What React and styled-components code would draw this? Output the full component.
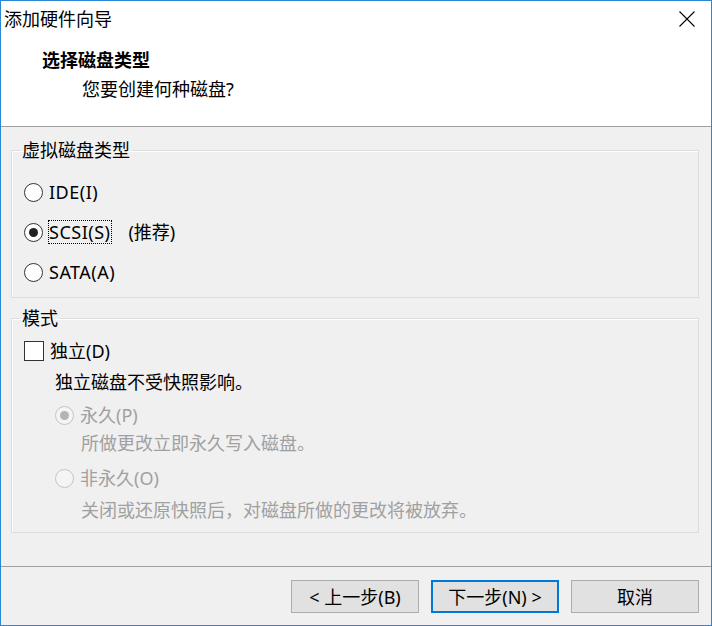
import React from 'react';
import styled, {createGlobalStyle} from "styled-components";

const GlobalStyle = createGlobalStyle`
    body {
        margin: 0;
        background: #ffffff;
    }
`

const Window = styled.div`
    width: 712px;
    height: 626px;
    box-sizing: border-box;
    border: 1px solid #2b86d6;
    display: flex;
    flex-direction: column;
    font-family: "Noto Sans", "Noto Sans CJK SC", sans-serif;
    font-size: 18px;
    color: #000;
    background: #f0f0f0;
`

const Top = styled.div`
    flex: 0 0 126px;
    box-sizing: border-box;
    background: #fff;
    border-bottom: 1px solid #a0a0a0;
`

const TitleBar = styled.div`
    height: 35px;
    display: flex;
    align-items: center;
    justify-content: space-between;
    padding: 0 16px 0 3px;
    line-height: 24px;
`

const Header = styled.div`
    padding: 12px 0 0 41px;
    line-height: 24px;
`

const HeaderTitle = styled.div`
    font-weight: bold;
`

const HeaderSub = styled.div`
    margin-top: 5px;
    padding-left: 40px;
`

const Body = styled.div`
    flex: 0 0 440px;
    box-sizing: border-box;
    padding: 11px 12px 0 10px;
    border-bottom: 1px solid #a0a0a0;
`

const Group = styled.fieldset`
    margin: ${props => props.$gap || 0}px 0 0 0;
    padding: 0;
    min-width: 0;
    border: 1px solid #dcdcdc;
    box-shadow: inset 1px 1px 0 #fff;
`

const Legend = styled.legend`
    margin-left: 8px;
    padding: 0 2px;
    line-height: 24px;
`

const Options = styled.div`
    display: flex;
    flex-direction: column;
    padding: ${props => props.$pad};
`

const Row = styled.div`
    display: flex;
    align-items: center;
    height: ${props => props.$h || 24}px;
    margin-top: ${props => props.$top || 0}px;
    margin-left: ${props => props.$indent || 0}px;
    line-height: 22px;
    color: ${props => props.$disabled ? '#a0a0a0' : '#000'};
`

const Radio = styled.span`
    width: 17px;
    height: 17px;
    flex: 0 0 17px;
    border: 1px solid ${props => props.$disabled ? '#c4c4c4' : '#333'};
    border-radius: 50%;
    background: ${props => props.$disabled ? '#f4f4f4' : '#fff'};
    display: flex;
    align-items: center;
    justify-content: center;
    margin-right: ${props => props.$space || 5}px;

    &::after {
        content: "";
        display: ${props => props.$checked ? 'block' : 'none'};
        width: 9px;
        height: 9px;
        border-radius: 50%;
        background: ${props => props.$disabled ? '#b4b4b4' : '#222'};
    }
`

const Check = styled.span`
    width: 18px;
    height: 18px;
    flex: 0 0 18px;
    border: 1px solid #333;
    background: #fff;
    margin-right: 6px;
`

const Label = styled.span`
    border: 1px ${props => props.$focus ? 'dotted #000' : 'solid transparent'};
    padding-right: 1px;
    letter-spacing: 0.5px;
`

const Note = styled.span`
    margin-left: 16px;
`

const Footer = styled.div`
    flex: 1;
    display: flex;
    justify-content: flex-end;
    align-items: flex-start;
    gap: 12px;
    padding: 13px 12px 0 0;
`

const Button = styled.button`
    width: 128px;
    height: 33px;
    box-sizing: border-box;
    font: inherit;
    line-height: 24px;
    color: #000;
    background: #e1e1e1;
    border: ${props => props.$default ? '2px solid #0078d7' : '1px solid #adadad'};
    padding: 0;
`

const Close = () => (
    <svg width="16" height="16" viewBox="0 0 16 16">
        <path d="M0.5 0.5 L15.5 15.5 M15.5 0.5 L0.5 15.5" stroke="#000" strokeWidth="1.1" fill="none"/>
    </svg>
)

const App = () => {
    return <Window>
        <GlobalStyle/>
        <Top>
            <TitleBar>
                <span>添加硬件向导</span>
                <Close/>
            </TitleBar>
            <Header>
                <HeaderTitle>选择磁盘类型</HeaderTitle>
                <HeaderSub>您要创建何种磁盘?</HeaderSub>
            </Header>
        </Top>
        <Body>
            <Group>
                <Legend>虚拟磁盘类型</Legend>
                <Options $pad="10px 0 5px 12px">
                    <Row $h={40}><Radio/><Label>IDE(I)</Label></Row>
                    <Row $h={40}><Radio $checked/><Label $focus>SCSI(S)</Label><Note>(推荐)</Note></Row>
                    <Row $h={40}><Radio/><Label>SATA(A)</Label></Row>
                </Options>
            </Group>
            <Group $gap={8}>
                <Legend>模式</Legend>
                <Options $pad="9px 0 10px 12px">
                    <Row><Check/>独立(D)</Row>
                    <Row $top={7} $indent={31}>独立磁盘不受快照影响。</Row>
                    <Row $top={9} $indent={31} $disabled><Radio $checked $disabled $space={6}/>永久(P)</Row>
                    <Row $top={4} $indent={57} $disabled>所做更改立即永久写入磁盘。</Row>
                    <Row $top={11} $indent={31} $disabled><Radio $disabled $space={6}/>非永久(O)</Row>
                    <Row $top={8} $indent={57} $disabled>关闭或还原快照后，对磁盘所做的更改将被放弃。</Row>
                </Options>
            </Group>
        </Body>
        <Footer>
            <Button>&lt; 上一步(B)</Button>
            <Button $default>下一步(N) &gt;</Button>
            <Button>取消</Button>
        </Footer>
    </Window>
}

export default App
